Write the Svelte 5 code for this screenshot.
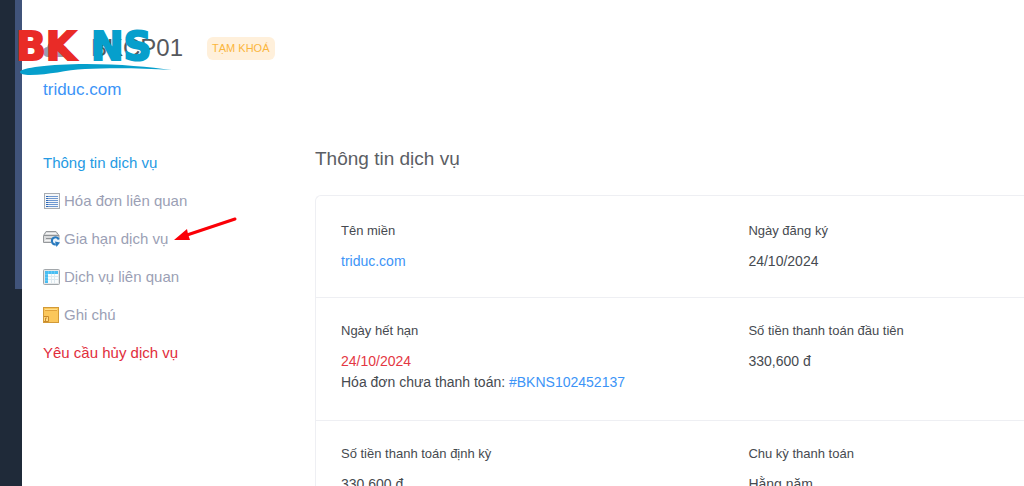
<script lang="ts">
	type MenuItem = {
		label: string;
		icon?: 'list' | 'renew' | 'grid' | 'note';
		kind?: 'active' | 'danger';
		pointed?: boolean;
	};

	type Field = {
		label: string;
		value: string;
		kind?: 'link' | 'expired';
		invoice?: string;
	};

	const menu: MenuItem[] = [
		{ label: 'Thông tin dịch vụ', kind: 'active' },
		{ label: 'Hóa đơn liên quan', icon: 'list' },
		{ label: 'Gia hạn dịch vụ', icon: 'renew', pointed: true },
		{ label: 'Dịch vụ liên quan', icon: 'grid' },
		{ label: 'Ghi chú', icon: 'note' },
		{ label: 'Yêu cầu hủy dịch vụ', kind: 'danger' }
	];

	const rows: Field[][] = [
		[
			{ label: 'Tên miền', value: 'triduc.com', kind: 'link' },
			{ label: 'Ngày đăng ký', value: '24/10/2024' }
		],
		[
			{ label: 'Ngày hết hạn', value: '24/10/2024', kind: 'expired', invoice: '#BKNS102452137' },
			{ label: 'Số tiền thanh toán đầu tiên', value: '330,600 đ' }
		],
		[
			{ label: 'Số tiền thanh toán định kỳ', value: '330,600 đ' },
			{ label: 'Chu kỳ thanh toán', value: 'Hằng năm' }
		]
	];
</script>

<div class="page">
	<aside class="rail">
		<div class="rail-track"></div>
	</aside>

	<div class="content">
		<header>
			<div class="title">
				<svg class="cloud" width="26" height="20" viewBox="0 0 26 20" aria-hidden="true">
					<path d="M5 19a5 5 0 0 1-.8-9.900A7.500 7.500 0 0 1 18.500 7.500 5.800 5.800 0 0 1 20 19z" fill="#999cb2" />
				</svg>
				<h1>BKCP01</h1>
				<span class="badge">TẠM KHOÁ</span>
			</div>
			<a class="domain" href="#domain">triduc.com</a>
		</header>

		<div class="columns">
			<nav>
				{#each menu as item}
					<a
						href="#menu"
						class:active={item.kind === 'active'}
						class:danger={item.kind === 'danger'}
					>
						{#if item.icon}
							<svg width="18" height="18" viewBox="0 0 18 18" aria-hidden="true">
								{#if item.icon === 'list'}
									<rect x="1.500" y="1.500" width="15" height="15" fill="#f4f6f8" stroke="#a9adb2" />
									<path d="M3 4.500h2M3 6.500h2M3 8.500h2M3 10.500h2M3 12.500h2M3 14.500h2" stroke="#2f68b5" />
									<path d="M5 4.500h10M5 6.500h10M5 8.500h10M5 10.500h10M5 12.500h10M5 14.500h10" stroke="#6f98d0" />
								{:else if item.icon === 'renew'}
									<path d="M3 1.500h10l3 4v7H.500v-7z" fill="#d9dadb" stroke="#95989b" />
									<path d="M1 5.500h15M3 8.500h8" stroke="#8f9295" />
									<path d="M3 3.500h10M2 10.500h6" stroke="#f5f5f5" />
									<circle cx="12.500" cy="11" r="4.500" fill="#e9f2fa" />
									<path d="M15.800 9.500a3.600 3.600 0 1 0-3 5" fill="none" stroke="#2779be" stroke-width="2" />
									<path d="M12 11.500l5 1-3.500 4.500z" fill="#2779be" />
								{:else if item.icon === 'grid'}
									<rect x=".5" y="1.500" width="16" height="15" rx="1" fill="#e4e7e9" stroke="#a2a7ab" />
									<rect x="2" y="3" width="13" height="12" fill="#f9fcfd" />
									<path d="M2 3h13v3H5v9H2z" fill="#48bdf2" />
									<path d="M5 8.500h10M5 11.500h10M8.500 6v9M11.500 6v9" stroke="#dce9f0" />
									<path d="M5.500 3v3M8.500 3v3M11.500 3v3M2 6.500h3M2 9.500h3M2 12.500h3" stroke="#66cbf6" />
								{:else}
									<rect x=".5" y="1.500" width="15" height="15" fill="#fbc75b" stroke="#d29a38" />
									<path d="M2 4.500h12" stroke="#e1a23b" />
									<path d="M2 3.500h12" stroke="#ffdf8c" />
									<path d="M1 10.500h4.500v5H1" fill="#ffda83" stroke="#c98a2b" />
									<path d="M2.500 15v-3H4" fill="none" stroke="#c98a2b" />
								{/if}
							</svg>
						{/if}
						{item.label}
						{#if item.pointed}
							<svg class="arrow" width="64" height="26" viewBox="0 0 64 26" aria-hidden="true">
								<path d="M61 2L13 18" stroke="#fb0007" stroke-width="3" stroke-linecap="round" />
								<path d="M0 23L13 12l1 5 2 6z" fill="#fb0007" />
							</svg>
						{/if}
					</a>
				{/each}
			</nav>

			<main>
				<h2>Thông tin dịch vụ</h2>
				<div class="card">
					{#each rows as row}
						<dl class="row">
							{#each row as field}
								<div class="field">
									<dt>{field.label}</dt>
									<dd>
										{#if field.kind === 'link'}
											<a href="#domain">{field.value}</a>
										{:else}
											<span class:expired={field.kind === 'expired'}>{field.value}</span>
										{/if}
									</dd>
									{#if field.invoice}
										<dd>Hóa đơn chưa thanh toán: <a href="#invoice">{field.invoice}</a></dd>
									{/if}
								</div>
							{/each}
						</dl>
					{/each}
				</div>
			</main>
		</div>
	</div>

	<!-- brand mark, laid over the corner of the page -->
	<div class="logo">
		<div class="logo-text"><span class="red">BK</span><span>NS</span></div>
		<svg width="152" height="12" viewBox="0 0 152 12" aria-hidden="true">
			<path d="M0 8C0 4 30 0 66 0c34 0 64 3 86 6-32-2-62-2-87-1C45 6 30 11 10 11 4 11 0 10 0 8z" fill="#069fcc" />
		</svg>
	</div>
</div>

<style>
	:global(body) {
		margin: 0;
		background: #fff;
	}

	.page {
		position: relative;
		display: flex;
		height: 100vh;
		overflow: hidden;
		color: #464a50;
		font: 14px/21px 'Liberation Sans', Arial, sans-serif;
	}

	a {
		color: #3c94f7;
		text-decoration: none;
	}

	.rail {
		display: flex;
		flex: none;
		justify-content: flex-end;
		width: 22px;
		background: #1f2a39;
	}

	.rail-track {
		width: 7px;
		height: 289px;
		background: #40537a;
	}

	.content {
		flex: 1;
		min-width: 0;
		padding: 32px 0 0 21px;
	}

	.title {
		display: flex;
		align-items: center;
		height: 32px;
	}

	.cloud {
		margin-right: 22px;
	}

	h1 {
		margin: 0;
		color: #55585d;
		font-size: 24px;
		font-weight: 400;
		line-height: 32px;
	}

	.badge {
		margin-left: 24px;
		padding: 0 5px;
		border-radius: 6px;
		background: #fff0db;
		color: #fbb63c;
		font-size: 11px;
		line-height: 23px;
	}

	.domain {
		display: block;
		margin-top: 14px;
		font-size: 17px;
		line-height: 24px;
	}

	.columns {
		display: flex;
		margin-top: 42px;
	}

	nav {
		display: flex;
		flex: none;
		flex-direction: column;
		align-items: flex-start;
		width: 272px;
	}

	nav a {
		position: relative;
		display: flex;
		align-items: center;
		gap: 3px;
		color: #9b9fb5;
		font-size: 15px;
		line-height: 38px;
	}

	nav .active {
		color: #259ae3;
	}

	nav .danger {
		color: #e12d3b;
	}

	.arrow {
		position: absolute;
		top: -3px;
		left: 100%;
		margin-left: 6px;
	}

	main {
		flex: 1;
		min-width: 0;
	}

	h2 {
		margin: 0 0 24px;
		padding-top: 2px;
		color: #5b5e64;
		font-size: 19px;
		font-weight: 400;
		line-height: 25px;
	}

	.card {
		border: 1px solid #eeeff3;
		border-right: 0;
		border-radius: 6px 0 0 0;
	}

	.row {
		display: grid;
		grid-template-columns: 3fr 2fr;
		margin: 0;
		padding: 24px 4px 25px 25px;
	}

	.row + .row {
		padding-top: 22px;
		padding-bottom: 27px;
		border-top: 1px solid #eeeff3;
	}

	dt {
		margin-bottom: 10px;
		font-size: 13px;
	}

	dd {
		margin: 0;
	}

	.expired {
		color: #e43743;
	}

	.logo {
		position: absolute;
		top: 25px;
		left: 16px;
	}

	.logo-text {
		display: flex;
		gap: 15px;
		height: 39px;
		color: #069fcc;
		font: bold 39px/44px 'DejaVu Sans', sans-serif;
		-webkit-text-stroke: 2px currentColor;
	}

	.red {
		color: #e92b27;
	}

	.logo svg {
		display: block;
		margin-left: 4px;
	}
</style>
